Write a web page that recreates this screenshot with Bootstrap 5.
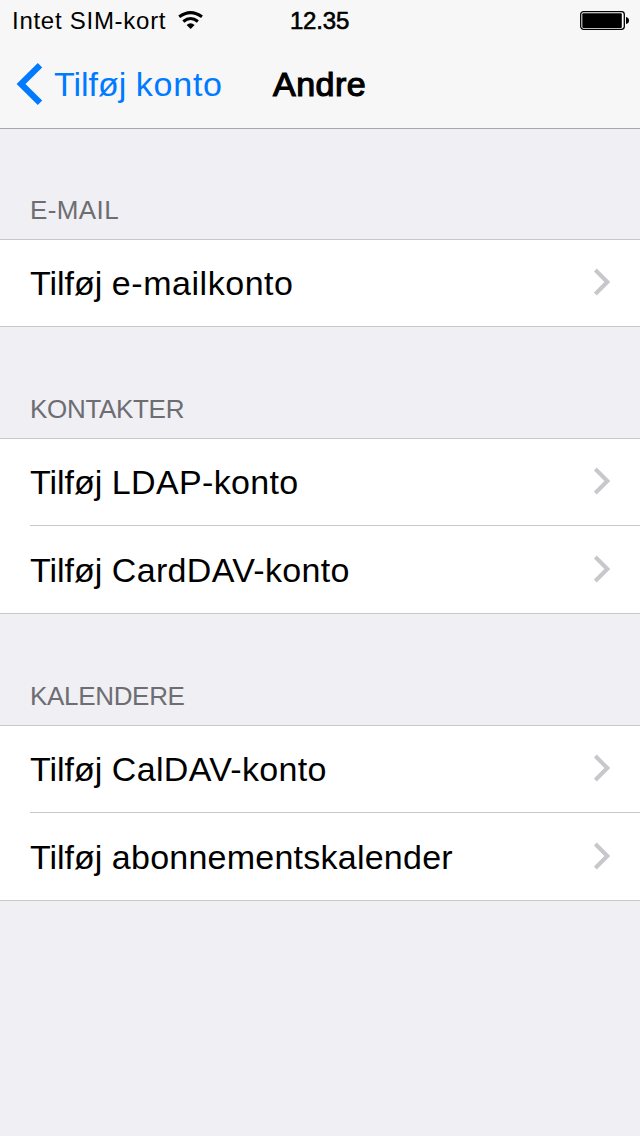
<!DOCTYPE html>
<html lang="da">
<head>
<meta charset="utf-8">
<meta name="viewport" content="width=device-width, initial-scale=1">
<title>Andre</title>
<link href="https://cdn.jsdelivr.net/npm/bootstrap@5.3.0/dist/css/bootstrap.min.css" rel="stylesheet">
<style>
body{background:#efeff4;color:#000;font-family:"Liberation Sans",Arial,sans-serif;font-size:34px;line-height:40px;min-height:1136px;overflow:hidden}
svg{display:block;flex:none}
span,h1,h2{white-space:nowrap}
.top-area{background:#f7f7f7;border-bottom:1px solid #a7a7aa;height:129px}
.status-bar{height:40px;font-size:24px;line-height:28px;padding:7px 10px 0 12px}
.side{flex:1 1 0}
.carrier{letter-spacing:.73px}
.status-icon{margin-top:3px}
.clock{-webkit-text-stroke:.6px #000;letter-spacing:-.2px;margin-right:3px}
.title-bar{height:88px;padding:0 16px}
.back{color:#007aff;text-decoration:none;width:257px}
.page-title{font-size:34px;line-height:40px;font-weight:400;-webkit-text-stroke:1.2px #000;letter-spacing:.5px}
.section-title{font-size:26px;line-height:30px;font-weight:400;color:#6d6d72;height:111px;padding:0 30px 14px;letter-spacing:-.32px}
.first-title{height:110px;letter-spacing:.4px}
.rows{background:#fff;border:solid #c8c7cc;border-width:1px 0;border-radius:0}
.rows .list-group-item{border:0;background:transparent;color:#000;height:86px;padding:0 30px 0 0;margin-left:30px}
.rows .list-group-item+.list-group-item{height:88px;border-top:1px solid #c8c7cc}
.list-group-item svg{margin-bottom:2px}
.back b,.rows b{font-weight:400;letter-spacing:.33px}
.rows .wide{letter-spacing:.54px}
.rows .tight{letter-spacing:.24px}
.back b{letter-spacing:.75px}
</style>
</head>
<body>
<header class="top-area">
  <div class="status-bar d-flex align-items-start">
    <div class="side d-flex">
      <span class="carrier">Intet SIM-kort</span>
      <svg class="status-icon ms-2" width="32" height="20" viewBox="0 0 32 20" fill="none" stroke="#000" stroke-width="3"><path d="M5.200 6.800Q16.600-1.600 28 6.800M9.300 11.500Q16.600 5.500 23.900 11.500"/><path d="M12.600 14.900Q16.600 11.400 20.600 14.900L16.600 19Z" fill="#000" stroke="none"/></svg>
    </div>
    <span class="clock">12.35</span>
    <div class="side d-flex justify-content-end">
      <svg class="status-icon" width="50" height="21" viewBox="0 0 50 21"><rect x=".7" y="1.700" width="43.600" height="17.600" rx="2.800" fill="#fff" stroke="#000" stroke-width="1.300"/><rect x="2.300" y="3.300" width="39.500" height="14.600" rx="1"/><path d="M46 7Q49 7.500 49 10.500T46 14Z"/></svg>
    </div>
  </div>
  <nav class="title-bar d-flex align-items-center">
    <a class="back d-flex align-items-center" href="#">
      <svg width="38" height="44" viewBox="0 0 38 44" fill="none" stroke="#007aff" stroke-width="6.200"><path d="M24 3.200L5 22L24 40.800"/></svg>
      <span>Tilføj <b>konto</b></span>
    </a>
    <h1 class="page-title m-0">Andre</h1>
  </nav>
</header>
<main>
  <h2 class="section-title first-title d-flex align-items-end m-0">E-MAIL</h2>
  <div class="list-group rows">
    <a class="list-group-item d-flex justify-content-between align-items-center" href="#"><span>Tilføj <b class="wide">e-mailkonto</b></span><svg width="17" height="28" viewBox="0 0 17 28" fill="none" stroke="#c7c7cc" stroke-width="4"><path d="M2.300 2L14.300 14L2.300 26"/></svg></a>
  </div>
  <h2 class="section-title d-flex align-items-end m-0">KONTAKTER</h2>
  <div class="list-group rows">
    <a class="list-group-item d-flex justify-content-between align-items-center" href="#"><span>Tilføj <b>LDAP-konto</b></span><svg width="17" height="28" viewBox="0 0 17 28" fill="none" stroke="#c7c7cc" stroke-width="4"><path d="M2.300 2L14.300 14L2.300 26"/></svg></a>
    <a class="list-group-item d-flex justify-content-between align-items-center" href="#"><span>Tilføj <b>CardDAV-konto</b></span><svg width="17" height="28" viewBox="0 0 17 28" fill="none" stroke="#c7c7cc" stroke-width="4"><path d="M2.300 2L14.300 14L2.300 26"/></svg></a>
  </div>
  <h2 class="section-title d-flex align-items-end m-0">KALENDERE</h2>
  <div class="list-group rows">
    <a class="list-group-item d-flex justify-content-between align-items-center" href="#"><span>Tilføj <b>CalDAV-konto</b></span><svg width="17" height="28" viewBox="0 0 17 28" fill="none" stroke="#c7c7cc" stroke-width="4"><path d="M2.300 2L14.300 14L2.300 26"/></svg></a>
    <a class="list-group-item d-flex justify-content-between align-items-center" href="#"><span>Tilføj <b class="tight">abonnementskalender</b></span><svg width="17" height="28" viewBox="0 0 17 28" fill="none" stroke="#c7c7cc" stroke-width="4"><path d="M2.300 2L14.300 14L2.300 26"/></svg></a>
  </div>
</main>
<script src="https://cdn.jsdelivr.net/npm/bootstrap@5.3.0/dist/js/bootstrap.bundle.min.js"></script>
</body>
</html>
